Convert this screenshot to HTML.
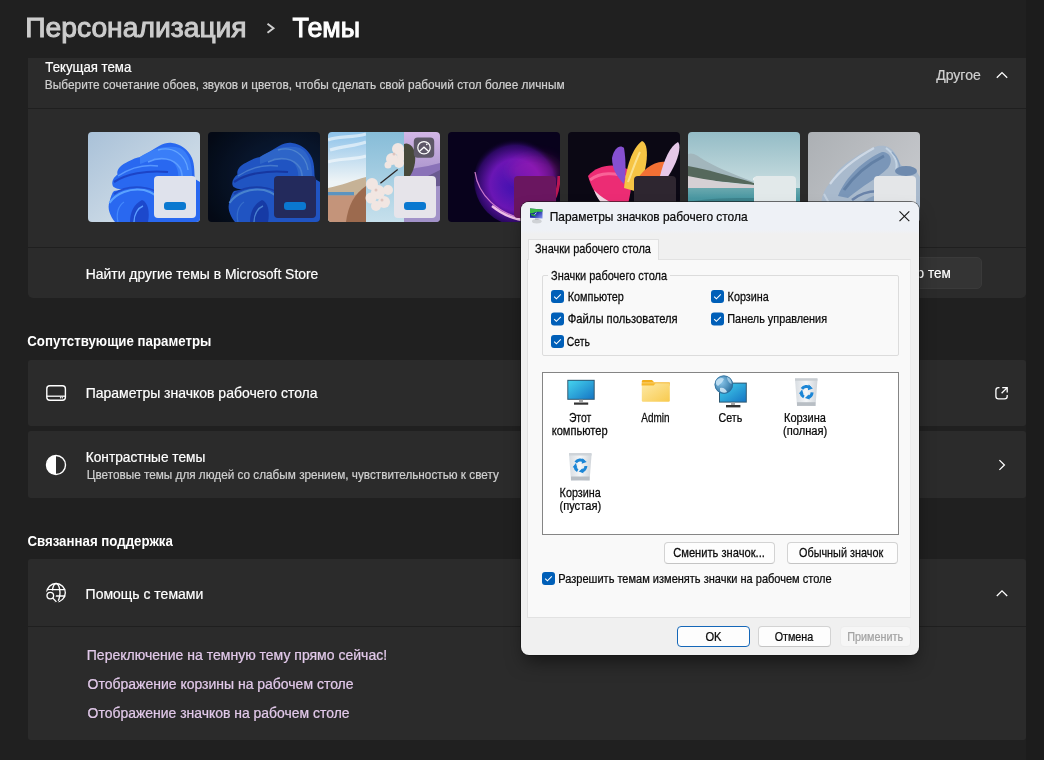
<!DOCTYPE html>
<html><head><meta charset="utf-8">
<style>
*{margin:0;padding:0;box-sizing:border-box}
html,body{width:1044px;height:760px;overflow:hidden;background:#202020;font-family:"Liberation Sans",sans-serif;color:#fff}
.a{position:absolute}
.card{position:absolute;left:28px;width:998px;background:#2b2b2b;border-radius:3px}
.dv{position:absolute;left:28px;width:998px;height:1px;background:#1f1f1f}
svg.layer{position:absolute;left:0;top:0;overflow:visible;will-change:transform}
svg.layer text{font-family:"Liberation Sans",sans-serif}
.cb{position:absolute;width:13px;height:13px;border-radius:3px;background:#005fb8}
.btn{position:absolute;border:1px solid #d3d3d3;border-bottom-color:#c4c4c4;border-radius:4px;background:#fdfdfd}
</style></head><body>
<div class="a" style="left:1026px;top:0;width:18px;height:760px;background:#1c1c1c"></div>
<svg class="a" style="left:0;top:0" width="300" height="50"><path d="M267.5 23.8 L273.5 28.3 L267.5 32.8" fill="none" stroke="#cfcfcf" stroke-width="1.9"/></svg>

<div class="card" style="top:58px;height:240px;border-radius:0 0 5px 5px"></div>
<div class="dv" style="top:108px"></div>
<div class="dv" style="top:247px"></div>

<div class="a" style="left:870px;top:257px;width:112px;height:32px;border-radius:5px;background:#343434;border:1px solid #3a3a3a"></div>

<div class="card" style="top:360px;height:66px"></div>
<div class="card" style="top:431px;height:67px"></div>
<div class="card" style="top:559px;height:181px"></div>
<div class="dv" style="top:626px"></div>
<svg class="a" style="left:0;top:0" width="1044" height="760">
 <path d="M996.8 77.8 L1002 72.6 L1007.2 77.8" fill="none" stroke="#fff" stroke-width="1.3"/>
 <path d="M996.8 596 L1002 590.8 L1007.2 596" fill="none" stroke="#fff" stroke-width="1.3"/>
 <path d="M999.4 460.1 L1004.4 465 L999.4 469.9" fill="none" stroke="#fff" stroke-width="1.3"/>
 <!-- external link -->
 <path d="M999.5 387.6 H998.5 A2.6 2.6 0 0 0 995.9 390.2 V396.3 A2.6 2.6 0 0 0 998.5 398.9 H1004.6 A2.6 2.6 0 0 0 1007.2 396.3 V395" fill="none" stroke="#fff" stroke-width="1.3"/>
 <path d="M1002.2 387.6 H1007.2 V392.6 M1007.2 387.6 L1001.6 393.2" fill="none" stroke="#fff" stroke-width="1.3"/>
 <!-- desktop icon -->
 <rect x="46.8" y="385.8" width="18.6" height="14.4" rx="3" fill="none" stroke="#fff" stroke-width="1.4"/>
 <path d="M46.8 396.2 H65.4" stroke="#fff" stroke-width="1.3"/>
 <circle cx="60.6" cy="397.8" r="0.7" fill="#fff"/><circle cx="62.3" cy="397.8" r="0.7" fill="#fff"/>
 <!-- contrast -->
 <circle cx="56" cy="465" r="9.5" fill="none" stroke="#fff" stroke-width="1.4"/>
 <path d="M56 455.5 A9.5 9.5 0 0 0 56 474.5 Z" fill="#fff"/>
 <!-- globe search -->
 <mask id="mg" maskUnits="userSpaceOnUse" x="30" y="570" width="50" height="50"><rect x="30" y="570" width="50" height="50" fill="#fff"/><circle cx="50.3" cy="595.6" r="5.6" fill="#000"/><path d="M53 598.6 L57.5 603" stroke="#000" stroke-width="4"/><circle cx="52.5" cy="601" r="2.2" fill="#000"/></mask>
 <g fill="none" stroke="#fff" stroke-width="1.35" mask="url(#mg)">
  <circle cx="56" cy="592.8" r="9.3"/>
  <ellipse cx="56.1" cy="592.8" rx="3.9" ry="9.3"/>
  <path d="M47 589.6 H65.2 M55 596 H65.2"/>
 </g>
 <g fill="none" stroke="#fff" stroke-width="1.35">
  <circle cx="50.3" cy="595.6" r="3.3"/>
  <path d="M52.7 598 L56.4 601.9"/>
 </g>
</svg>
<svg class="a" style="left:0;top:0" width="1044" height="240">
<defs>
 <clipPath id="rr"><rect x="0" y="0" width="112" height="90" rx="4"/></clipPath>
 <linearGradient id="g1bg" x1="0" y1="0" x2="1" y2="1"><stop offset="0" stop-color="#a9c1d8"/><stop offset="0.6" stop-color="#c9d8e5"/><stop offset="1" stop-color="#d2dee8"/></linearGradient>
 <linearGradient id="bl1" x1="0" y1="0" x2="1" y2="1"><stop offset="0" stop-color="#3d82f7"/><stop offset="1" stop-color="#1547c8"/></linearGradient>
 <linearGradient id="bl2" x1="0" y1="0" x2="0" y2="1"><stop offset="0" stop-color="#2f6ff2"/><stop offset="1" stop-color="#1a4fd6"/></linearGradient>
 <radialGradient id="g2bg" cx="0.7" cy="0.5" r="0.8"><stop offset="0" stop-color="#10284f"/><stop offset="1" stop-color="#050b18"/></radialGradient>
 <linearGradient id="sky3" x1="0" y1="0" x2="0" y2="1"><stop offset="0" stop-color="#8cc2ea"/><stop offset="0.3" stop-color="#c4def0"/><stop offset="0.55" stop-color="#eef4f6"/></linearGradient>
 <linearGradient id="mid3" x1="0" y1="0" x2="0" y2="1"><stop offset="0" stop-color="#86bcd8"/><stop offset="1" stop-color="#c6e0ec"/></linearGradient>
 <linearGradient id="rt3" x1="0" y1="0" x2="0" y2="1"><stop offset="0" stop-color="#d2b6e6"/><stop offset="0.4" stop-color="#b09ad0"/><stop offset="1" stop-color="#9a88c0"/></linearGradient>
 <radialGradient id="g4a" cx="0.45" cy="0.55" r="0.5"><stop offset="0" stop-color="#3a12b0"/><stop offset="0.55" stop-color="#6a16b4"/><stop offset="0.85" stop-color="#2a0860"/><stop offset="1" stop-color="#08021c" stop-opacity="0"/></radialGradient>
 <filter id="blur4" x="-50%" y="-50%" width="200%" height="200%"><feGaussianBlur stdDeviation="6"/></filter>
 <linearGradient id="sky6" x1="0" y1="0" x2="0" y2="1"><stop offset="0" stop-color="#94bcc6"/><stop offset="0.6" stop-color="#c8dde0"/><stop offset="1" stop-color="#dfe9ea"/></linearGradient>
 <linearGradient id="lake6" x1="0" y1="0" x2="0" y2="1"><stop offset="0" stop-color="#6aa8ae"/><stop offset=".3" stop-color="#4a98a2"/><stop offset="1" stop-color="#3a8894"/></linearGradient>
 <linearGradient id="g7bg" x1="0" y1="0" x2="1" y2="0.6"><stop offset="0" stop-color="#acb0b4"/><stop offset="1" stop-color="#c6c8cc"/></linearGradient>
 <linearGradient id="bl7" x1="0" y1="0" x2="1" y2="1"><stop offset="0" stop-color="#aac0d8"/><stop offset="1" stop-color="#6e8cb0"/></linearGradient>
</defs>

<!-- T1 -->
<g transform="translate(88,132)" clip-path="url(#rr)">
 <rect width="112" height="90" fill="url(#g1bg)"/>
 <g id="bloom">
  <path d="M27 90 C22 84 19 76 21.5 70 C22.5 65 24 61 26 59 L35 57.5 C30 57 25 56 24.5 53 C23.5 49 26 45 29.5 42.5 C28.5 39 31 34 38 30.8 C44 27 50 25 52 24.9 C58 22.5 64 18 71 14 C76 11 81 10.5 84 11 C92 12 100 17 104 26 C107 33 106 42 107 47 L112 50 L112 90 Z" fill="#2968f0"/>
  <path d="M52 25 C62 18 78 12 92 16 C100 20 104 30 104 44 L90 50 C92 36 86 26 74 26 C66 26 58 30 52 32 Z" fill="#3a7ef8"/>
  <path d="M60 30 C72 24 86 26 92 36 C96 44 94 56 92 62" fill="none" stroke="#5b9cff" stroke-width="1.6"/>
  <path d="M70 18 C84 14 98 22 100 38" fill="none" stroke="#62a4ff" stroke-width="1.4"/>
  <path d="M26 50 C38 42 58 38 80 40" fill="none" stroke="#1a3ec0" stroke-width="2.2" opacity=".85"/>
  <path d="M30 44 C42 36 56 32 70 34" fill="none" stroke="#5c9cff" stroke-width="1.4" opacity=".9"/>
  <path d="M21.5 71 C28 61 42 56 56 58 C64 60 70 64 72 70" fill="none" stroke="#5aa2ff" stroke-width="2"/>
  <path d="M26 62 C34 56 46 54 58 56 C70 58 76 66 78 74" fill="none" stroke="#1d46c8" stroke-width="1.6" opacity=".8"/>
  <path d="M42 90 C42 80 46 72 54 68 C60 70 62 80 60 90 Z" fill="#1c48cc"/>
  <path d="M46 90 C46 82 50 76 55 74" fill="none" stroke="#5a9eff" stroke-width="1.4"/>
  <path d="M30 90 C28 82 30 74 36 70" fill="none" stroke="#4a90ff" stroke-width="1.2" opacity=".8"/>
 </g>
 <rect x="66" y="44" width="42" height="42" rx="4" fill="#dfe2ec"/>
 <rect x="76" y="70" width="22" height="8" rx="3" fill="#0a78d0"/>
</g>
<!-- T2 -->
<g transform="translate(208,132)" clip-path="url(#rr)">
 <rect width="112" height="90" fill="url(#g2bg)"/>
 <use href="#bloom"/>
 <rect width="112" height="90" fill="#02040c" opacity=".2"/>
 <rect x="66" y="44" width="42" height="42" rx="4" fill="#232a5c"/>
 <rect x="76" y="70" width="22" height="8" rx="3" fill="#0a78d0"/>
</g>
<!-- T3 -->
<g transform="translate(328,132)" clip-path="url(#rr)">
 <rect width="38" height="90" fill="url(#sky3)"/>
 <path d="M0 8 C10 4 24 6 38 2 M2 18 C14 14 28 14 38 10 M0 30 C12 26 26 28 38 24" stroke="#fff" stroke-width="3.2" opacity=".55" fill="none"/>
 <path d="M0 56 C12 54 26 48 38 45 L38 90 L0 90 Z" fill="#c6b296"/>
 <rect x="0" y="60" width="26" height="3.6" fill="#5c94c0"/>
 <path d="M0 63.6 L26 63.6 L38 58 L38 90 L0 90 Z" fill="#c4947a"/>
 <path d="M18 90 C20 74 26 62 38 54 L38 90 Z" fill="#9c6a4e"/>
 <rect x="38" width="38" height="90" fill="url(#mid3)"/>
 <path d="M52.4 51.2 L69.7 37.6" stroke="#2a2424" stroke-width="1.3"/>
 <g fill="#f1e6e2">
  <circle cx="70" cy="17" r="6"/><circle cx="74" cy="24" r="5"/><circle cx="64" cy="27" r="6"/><circle cx="71" cy="31" r="5"/><circle cx="60" cy="33" r="3.5"/>
  <circle cx="44" cy="52" r="6"/><circle cx="50" cy="60" r="7"/><circle cx="43" cy="66" r="5.5"/><circle cx="56" cy="70" r="6"/><circle cx="60" cy="58" r="5"/><circle cx="48" cy="74" r="5"/>
 </g>
 <g fill="#d8b8b0" opacity=".7"><circle cx="66" cy="22" r="1.5"/><circle cx="48" cy="58" r="1.5"/><circle cx="54" cy="68" r="1.5"/></g>
 <rect x="76" width="36" height="90" fill="url(#rt3)"/>
 <path d="M76 40 L88 36 L100 34 L112 31 L112 56 L76 56 Z" fill="#8a72b8"/>
 <path d="M100 44 L112 38 L112 58 L96 58 Z" fill="#6a5a90"/>
 <path d="M76 56 L112 54 L112 90 L76 90 Z" fill="#a292c8"/>
 <path d="M76 12 C80 10 86 14 87 22 C88 30 86 38 82 44 L76 44 Z" fill="#46483a"/>
 <rect x="85.8" y="5.6" width="20.4" height="20.2" rx="4" fill="#5e5868"/>
 <circle cx="96" cy="15.7" r="6.2" fill="none" stroke="#fff" stroke-width="1.25"/>
 <path d="M91 19.8 L96 15.2 L101 19.8" fill="none" stroke="#fff" stroke-width="1.25"/>
 <circle cx="98.8" cy="12.4" r=".8" fill="#fff"/>
 <rect x="66" y="44" width="42" height="42" rx="4" fill="#e6e4ea"/>
 <rect x="76" y="70" width="22" height="8" rx="3" fill="#0a78d0"/>
</g>
<!-- T4 -->
<g transform="translate(448,132)" clip-path="url(#rr)">
 <rect width="112" height="90" fill="#08021c"/>
 <circle cx="72" cy="48" r="46" fill="url(#g4a)"/>
 <ellipse cx="86" cy="40" rx="26" ry="16" fill="#b41ab0" opacity=".45" filter="url(#blur4)"/>
 <path d="M27 40 C30 62 48 82 82 89" fill="none" stroke="#e08ad8" stroke-width="1.3" opacity=".85"/>
 <path d="M44 74 C56 84 70 89 86 89" fill="none" stroke="#ffd0f0" stroke-width="2.4" opacity=".9"/>
 <path d="M111 44 C111 56 108 66 102 74" fill="none" stroke="#e21a5a" stroke-width="3" opacity=".8"/>
 <rect x="66" y="44" width="42" height="42" rx="4" fill="#6a1660"/>
</g>
<!-- T5 -->
<g transform="translate(568,132)" clip-path="url(#rr)">
 <rect width="112" height="90" fill="#0b0814"/>
 <path d="M20 44 C30 32 50 30 64 40 C64 54 62 66 58 80 C42 80 26 66 20 44 Z" fill="#ec2c74"/>
 <path d="M22 48 C32 40 48 40 60 46" fill="none" stroke="#ff7aa8" stroke-width="3" opacity=".7"/>
 <path d="M26 58 C34 66 44 72 56 76 L52 84 C40 80 30 70 26 58 Z" fill="#f0d4e2"/>
 <path d="M44 26 C46 16 52 12 56 16 C58 28 58 42 56 52 C50 46 44 38 44 26 Z" fill="#8650d0"/>
 <path d="M56 56 C58 36 64 16 74 9 C82 12 80 36 70 60 Z" fill="#f6c444"/>
 <path d="M60 50 C64 40 68 28 72 20" fill="none" stroke="#fde9a0" stroke-width="2" opacity=".8"/>
 <path d="M66 52 C74 38 86 28 98 30 C102 36 92 50 74 58 Z" fill="#f27034"/>
 <path d="M92 44 C96 28 102 14 110 10 C114 14 110 32 96 50 Z" fill="#e6c8e8"/>
 <rect x="66" y="44" width="42" height="42" rx="4" fill="#2e2630"/>
</g>
<!-- T6 -->
<g transform="translate(688,132)" clip-path="url(#rr)">
 <rect width="112" height="90" fill="url(#sky6)"/>
 <path d="M0 22 C5 20 10 24 16 28 C26 34 44 42 66 50 L0 50 Z" fill="#a2b6bc"/>
 <path d="M0 34 C16 37 40 43 66 51 L66 53 L0 46 Z" fill="#55685c"/>
 <path d="M0 44 C20 48 44 52 66 53 L66 57 L0 58 Z" fill="#d6d0d4"/>
 <rect x="0" y="56" width="112" height="34" fill="url(#lake6)"/>
 <path d="M0 70 C20 66 44 66 66 66 L66 74 L0 80 Z" fill="#2e6a74" opacity=".45"/>
 <ellipse cx="72" cy="47" rx="7" ry="3" fill="#f6fafa" opacity=".9"/>
 <rect x="66" y="44" width="42" height="42" rx="4" fill="#e2e9ea"/>
</g>
<!-- T7 -->
<g transform="translate(808,132)" clip-path="url(#rr)">
 <rect width="112" height="90" fill="url(#g7bg)"/>
 <path d="M12 90 L14 66 C15 62 16 61 16 60 C18 56 20 53 21.5 51.5 C25 46 28 41 31 37.5 C36 33 40 29 45 26.8 C50 23 54 21 58 19.3 C62 17 66 15 69.7 14 C72 13.5 75 13.5 77 14 C80 15 83 16.5 84.8 18.2 C87 21 89 25 90 27.9 C91 30 93 33 94.4 34.3 C97 35 100 35 103 35.4 C106 37 108 39 109.4 40.8 L112 45 L112 90 Z" fill="#a9bacd"/>
 <path d="M30 64 C38 44 56 28 74 20 C82 20 86 28 80 36 C70 46 54 54 40 66 Z" fill="#7a96b8"/>
 <path d="M36 58 C46 44 60 32 76 24" fill="none" stroke="#5c7aa0" stroke-width="3" opacity=".8"/>
 <path d="M22 52 C32 38 48 26 66 16" fill="none" stroke="#d0dce8" stroke-width="2.2" opacity=".9"/>
 <path d="M78 16 C86 22 90 30 88 38" fill="none" stroke="#c4d4e4" stroke-width="2"/>
 <path d="M84 20 C90 26 92 32 92 38" fill="none" stroke="#8aa4c2" stroke-width="1.5"/>
 <ellipse cx="98" cy="39" rx="11" ry="5" fill="#6e8aae"/>
 <path d="M40 90 C44 76 56 66 72 62 C80 62 86 70 86 90 Z" fill="#8aa2be"/>
 <path d="M44 68 C54 60 66 58 78 60" fill="none" stroke="#5a76a0" stroke-width="2.5" opacity=".8"/>
 <path d="M16 62 C20 70 26 78 30 90" fill="none" stroke="#c8d6e4" stroke-width="2" opacity=".8"/>
 <rect x="66" y="44" width="42" height="42" rx="4" fill="#e4e6e8"/>
</g>
</svg>
<svg class="layer" width="1044" height="760">
<text transform="matrix(1.0099 0 0 1 25.18 36.60)" font-size="28" fill="#cccccc" stroke="#cccccc" stroke-width="1.0">Персонализация</text>
<text transform="matrix(0.9603 0 0 1 292.50 36.60)" font-size="28" fill="#ffffff" stroke="#ffffff" stroke-width="1.0">Темы</text>
<text transform="matrix(0.9444 0 0 1 45.30 71.80)" font-size="14" fill="#fff" stroke="#fff" stroke-width="0.2">Текущая тема</text>
<text transform="matrix(0.9905 0 0 1 44.80 89.20)" font-size="12" fill="#d0d0d0" stroke="#d0d0d0" stroke-width="0.2">Выберите сочетание обоев, звуков и цветов, чтобы сделать свой рабочий стол более личным</text>
<text transform="matrix(1.0023 0 0 1 936.20 79.70)" font-size="14" fill="#d0d0d0" stroke="#d0d0d0" stroke-width="0.2">Другое</text>
<text transform="matrix(0.9934 0 0 1 85.81 279.00)" font-size="14" fill="#fff" stroke="#fff" stroke-width="0.2">Найти другие темы в Microsoft Store</text>
<text transform="matrix(0.9700 0 0 1 884.96 277.80)" font-size="14" fill="#fff" stroke="#fff" stroke-width="0.2">Обзор тем</text>
<text transform="matrix(0.9476 0 0 1 27.30 345.70)" font-size="14" font-weight="bold" fill="#fff">Сопутствующие параметры</text>
<text transform="matrix(0.9997 0 0 1 85.70 398.10)" font-size="14" fill="#fff" stroke="#fff" stroke-width="0.2">Параметры значков рабочего стола</text>
<text transform="matrix(0.9793 0 0 1 85.72 462.20)" font-size="14" fill="#fff" stroke="#fff" stroke-width="0.2">Контрастные темы</text>
<text transform="matrix(0.9800 0 0 1 86.70 478.90)" font-size="12" fill="#d0d0d0" stroke="#d0d0d0" stroke-width="0.2">Цветовые темы для людей со слабым зрением, чувствительностью к свету</text>
<text transform="matrix(0.9492 0 0 1 27.40 545.70)" font-size="14" font-weight="bold" fill="#fff">Связанная поддержка</text>
<text transform="matrix(0.9998 0 0 1 85.60 598.70)" font-size="14" fill="#fff" stroke="#fff" stroke-width="0.2">Помощь с темами</text>
<text transform="matrix(1.0022 0 0 1 86.80 660.00)" font-size="14" fill="#e2c9ea" stroke="#e2c9ea" stroke-width="0.2">Переключение на темную тему прямо сейчас!</text>
<text transform="matrix(0.9996 0 0 1 87.60 689.00)" font-size="14" fill="#e2c9ea" stroke="#e2c9ea" stroke-width="0.2">Отображение корзины на рабочем столе</text>
<text transform="matrix(0.9970 0 0 1 87.60 718.00)" font-size="14" fill="#e2c9ea" stroke="#e2c9ea" stroke-width="0.2">Отображение значков на рабочем столе</text>
</svg><div class="a" style="left:521px;top:202px;width:398px;height:453px;border-radius:8px;background:#f0f0f0;box-shadow:0 0 0 1px rgba(20,20,20,.6),0 10px 18px -4px rgba(0,0,0,.5);overflow:hidden">
 <div class="a" style="left:0;top:0;width:398px;height:32px;background:linear-gradient(#eef1f6 0,#eef1f6 28px,#f0f0f0 32px)"></div>
</div>
<svg class="a" style="left:0;top:0" width="1044" height="760">
 <!-- title icon -->
 <g>
  <defs><linearGradient id="ti" x1="0" y1="0" x2="1" y2="1"><stop offset="0" stop-color="#0a1a70"/><stop offset=".5" stop-color="#2030a8"/><stop offset="1" stop-color="#8a98f0"/></linearGradient></defs>
  <path d="M530 208.5 L542.5 209.5 L542.5 218.5 L530 217.8 Z" fill="url(#ti)"/>
  <path d="M530 208.5 L542.5 209.5 L542.5 211.8 C539 211.5 536 211.5 533 213 L530 213.5 Z" fill="#3cb848"/><path d="M531 214 C533 213.5 535 214 536 216 C534 216.5 532 216 531 215 Z" fill="#2a9a40"/>
  <path d="M534.5 214.5 L536.5 212.8" stroke="#c8f0ff" stroke-width="1"/>
  <ellipse cx="536.8" cy="221.2" rx="4.8" ry="2.2" fill="#cfd2d6"/>
  <rect x="535" y="218.4" width="3.6" height="1.6" fill="#b8bcc0"/>
 </g>
 <path d="M899.5 211.3 L909.3 221.1 M909.3 211.3 L899.5 221.1" stroke="#1a1a1a" stroke-width="1.15"/>
</svg>
<!-- tab panel -->
<div class="a" style="left:527px;top:259px;width:384px;height:359px;background:#f9f9f9;border:1px solid #e2e2e2;border-right-color:#ebebeb"></div>
<div class="a" style="left:528px;top:239px;width:131px;height:21px;background:#f9f9f9;border:1px solid #e0e0e0;border-bottom:none"></div>
<!-- group -->
<div class="a" style="left:542px;top:275px;width:357px;height:81px;border:1px solid #dcdcdc;border-radius:2px"></div>
<div class="a" style="left:548px;top:270px;width:122px;height:10px;background:#f9f9f9"></div>
<!-- list -->
<div class="a" style="left:542px;top:372px;width:357px;height:163px;background:#fff;border:1px solid #858585"></div>
<!-- buttons -->
<div class="btn" style="left:664px;top:542px;width:111px;height:22px"></div>
<div class="btn" style="left:787px;top:542px;width:111px;height:22px"></div>
<div class="btn" style="left:677px;top:626px;width:73px;height:21px;border:1.5px solid #1567b8"></div>
<div class="btn" style="left:758px;top:626px;width:73px;height:21px"></div>
<div class="btn" style="left:840px;top:626px;width:71px;height:21px;border-color:#ececec;background:#f6f6f6"></div>
<svg class="a" style="left:0;top:0" width="1044" height="760">
 <defs>
  <g id="chk"><rect width="13" height="13" rx="3" fill="#005fb8"/><path d="M3.2 6.6 L5.4 8.8 L9.8 4.4" fill="none" stroke="#fff" stroke-width="1.1"/></g>
  <linearGradient id="scr" x1="0" y1="0" x2="1" y2="1"><stop offset="0" stop-color="#44d3ee"/><stop offset="1" stop-color="#1676c4"/></linearGradient>
  <linearGradient id="fold" x1="0" y1="0" x2="1" y2="1"><stop offset="0" stop-color="#fde9a6"/><stop offset="1" stop-color="#f8ca4e"/></linearGradient>
  <radialGradient id="glb" cx="0.35" cy="0.35" r="0.7"><stop offset="0" stop-color="#8cc8ec"/><stop offset="1" stop-color="#2a6f9e"/></radialGradient>
  <linearGradient id="bin" x1="0" y1="0" x2="1" y2="0"><stop offset="0" stop-color="#d8dde2"/><stop offset=".5" stop-color="#f4f6f8"/><stop offset="1" stop-color="#d0d5da"/></linearGradient>
  <g id="rec">
   <path d="M-4.6 -3.2 A5.6 5.6 0 0 1 3.6 -4.3" fill="none" stroke="#1c86d6" stroke-width="3"/>
   <path d="M2.2 -7.4 L6.4 -3.6 L1.4 -1.8 Z" fill="#1c86d6"/>
   <path d="M5.6 0.4 A5.6 5.6 0 0 1 1.2 5.5" fill="none" stroke="#1c86d6" stroke-width="3"/>
   <path d="M3.2 7.6 L-1.6 6 L2.2 2.6 Z" fill="#1c86d6"/>
   <path d="M-2.6 5 A5.6 5.6 0 0 1 -5.5 0.8" fill="none" stroke="#1c86d6" stroke-width="3"/>
   <path d="M-7.6 1.6 L-4.4 -2.6 L-3 2.2 Z" fill="#1c86d6"/>
  </g>
 </defs>
 <use href="#chk" x="551" y="290"/>
 <use href="#chk" x="711" y="290"/>
 <use href="#chk" x="551" y="312.5"/>
 <use href="#chk" x="711" y="312.5"/>
 <use href="#chk" x="551" y="335"/>
 <use href="#chk" x="542" y="572"/>
 <!-- monitor -->
 <rect x="567.3" y="379.8" width="27.4" height="20" fill="#2b5670"/>
 <rect x="568.3" y="380.8" width="25.4" height="18" fill="url(#scr)"/>
 <rect x="579" y="399.8" width="4" height="2.2" fill="#a8a8a8"/>
 <rect x="574" y="402.5" width="14.2" height="2.2" fill="#333"/>
 <!-- folder -->
 <path d="M641.8 381.3 A1.5 1.5 0 0 1 643.3 379.9 H652 L654.2 382.2 H641.8 Z" fill="#f2ae1c"/>
 <rect x="641.8" y="382.3" width="28" height="3.4" fill="#f4b42a"/>
 <rect x="641.8" y="383.2" width="28" height="18.5" rx="1.2" fill="url(#fold)"/>
 <path d="M641.8 385.6 H653.6 L655.6 383.2 H641.8 Z" fill="#f6b82c"/>
 <!-- network -->
 <rect x="719" y="382.6" width="27.8" height="20" fill="#2b5670"/>
 <rect x="720" y="383.6" width="25.8" height="18" fill="url(#scr)"/>
 <rect x="731" y="402.6" width="4" height="2.4" fill="#a8a8a8"/>
 <rect x="726" y="405" width="14.4" height="2.4" fill="#333"/>
 <circle cx="723.8" cy="384.6" r="9.2" fill="url(#glb)"/>
 <circle cx="723.8" cy="384.6" r="8.8" fill="none" stroke="#2f6c98" stroke-width=".8"/>
 <path d="M716 381 C718 378 722 377 724 379 C723 382 720 384 718 386 C716 385 715.5 383 716 381 Z" fill="#c8e4f6" opacity=".85"/>
 <path d="M720 388 C723 387 726 389 727 392 C725 393 722 393 720 391 Z" fill="#d6ecfa" opacity=".85"/>
 <path d="M727 377 C730 378 732 381 731.5 384 C729 383 727 380 727 377 Z" fill="#bfe0f4" opacity=".7"/>
 <!-- bins -->
 <g transform="translate(795,377.2)">
  <path d="M0 2 L22.5 2 L20.5 28.7 L2 28.7 Z" fill="url(#bin)"/>
  <path d="M0 1 H22.5 V3.5 H0 Z" fill="#c8cdd2"/>
  <path d="M2 25 H20.5 L20.5 28.7 H2 Z" fill="#b8bec4"/>
  <use href="#rec" x="11.5" y="14.8"/>
 </g>
 <g transform="translate(569,453)">
  <path d="M0 1 L22.6 1 L20.6 27.4 L2 27.4 Z" fill="url(#bin)"/>
  <path d="M0 0 H22.6 V2.5 H0 Z" fill="#cfd4d9"/>
  <path d="M2 23.5 H20.6 V27.4 H2 Z" fill="#b8bec4"/>
  <use href="#rec" x="11.3" y="12.6"/>
 </g>
</svg>
<svg class="layer" width="1044" height="760">
<text transform="matrix(0.9186 0 0 1 549.78 221.10)" font-size="13" fill="#0a0a0a" stroke="#0a0a0a" stroke-width="0.25">Параметры значков рабочего стола</text>
<text transform="matrix(0.8769 0 0 1 535.00 252.80)" font-size="12.5" fill="#0a0a0a" stroke="#0a0a0a" stroke-width="0.25">Значки рабочего стола</text>
<text transform="matrix(0.8792 0 0 1 551.00 279.90)" font-size="12.5" fill="#0a0a0a" stroke="#0a0a0a" stroke-width="0.25">Значки рабочего стола</text>
<text transform="matrix(0.9049 0 0 1 567.70 301.00)" font-size="12" fill="#0a0a0a" stroke="#0a0a0a" stroke-width="0.25">Компьютер</text>
<text transform="matrix(0.8993 0 0 1 727.60 301.00)" font-size="12" fill="#0a0a0a" stroke="#0a0a0a" stroke-width="0.25">Корзина</text>
<text transform="matrix(0.9371 0 0 1 567.80 322.70)" font-size="12" fill="#0a0a0a" stroke="#0a0a0a" stroke-width="0.25">Файлы пользователя</text>
<text transform="matrix(0.9058 0 0 1 727.30 322.70)" font-size="12" fill="#0a0a0a" stroke="#0a0a0a" stroke-width="0.25">Панель управления</text>
<text transform="matrix(0.8662 0 0 1 566.80 345.80)" font-size="12" fill="#0a0a0a" stroke="#0a0a0a" stroke-width="0.25">Сеть</text>
<text transform="matrix(0.8638 0 0 1 568.90 421.80)" font-size="12" fill="#0a0a0a" stroke="#0a0a0a" stroke-width="0.25">Этот</text>
<text transform="matrix(0.9255 0 0 1 551.70 434.50)" font-size="12" fill="#0a0a0a" stroke="#0a0a0a" stroke-width="0.25">компьютер</text>
<text transform="matrix(0.8308 0 0 1 641.30 421.80)" font-size="12" fill="#0a0a0a" stroke="#0a0a0a" stroke-width="0.25">Admin</text>
<text transform="matrix(0.8889 0 0 1 718.50 421.80)" font-size="12" fill="#0a0a0a" stroke="#0a0a0a" stroke-width="0.25">Сеть</text>
<text transform="matrix(0.9189 0 0 1 784.00 421.80)" font-size="12" fill="#0a0a0a" stroke="#0a0a0a" stroke-width="0.25">Корзина</text>
<text transform="matrix(0.9300 0 0 1 782.97 434.70)" font-size="12" fill="#0a0a0a" stroke="#0a0a0a" stroke-width="0.25">(полная)</text>
<text transform="matrix(0.8993 0 0 1 559.60 496.80)" font-size="12" fill="#0a0a0a" stroke="#0a0a0a" stroke-width="0.25">Корзина</text>
<text transform="matrix(0.9300 0 0 1 559.42 510.00)" font-size="12" fill="#0a0a0a" stroke="#0a0a0a" stroke-width="0.25">(пустая)</text>
<text transform="matrix(0.9290 0 0 1 673.20 556.80)" font-size="12" fill="#0a0a0a" stroke="#0a0a0a" stroke-width="0.25">Сменить значок...</text>
<text transform="matrix(0.9048 0 0 1 799.00 556.80)" font-size="12" fill="#0a0a0a" stroke="#0a0a0a" stroke-width="0.25">Обычный значок</text>
<text transform="matrix(0.9191 0 0 1 558.30 582.70)" font-size="12" fill="#0a0a0a" stroke="#0a0a0a" stroke-width="0.25">Разрешить темам изменять значки на рабочем столе</text>
<text transform="matrix(0.9300 0 0 1 705.44 641.20)" font-size="12" fill="#0a0a0a" stroke="#0a0a0a" stroke-width="0.25">OK</text>
<text transform="matrix(0.8967 0 0 1 774.70 641.20)" font-size="12" fill="#0a0a0a" stroke="#0a0a0a" stroke-width="0.25">Отмена</text>
<text transform="matrix(0.9004 0 0 1 847.30 641.20)" font-size="12" fill="#a3a3a3" stroke="#a3a3a3" stroke-width="0.25">Применить</text>
</svg>
</body></html>
